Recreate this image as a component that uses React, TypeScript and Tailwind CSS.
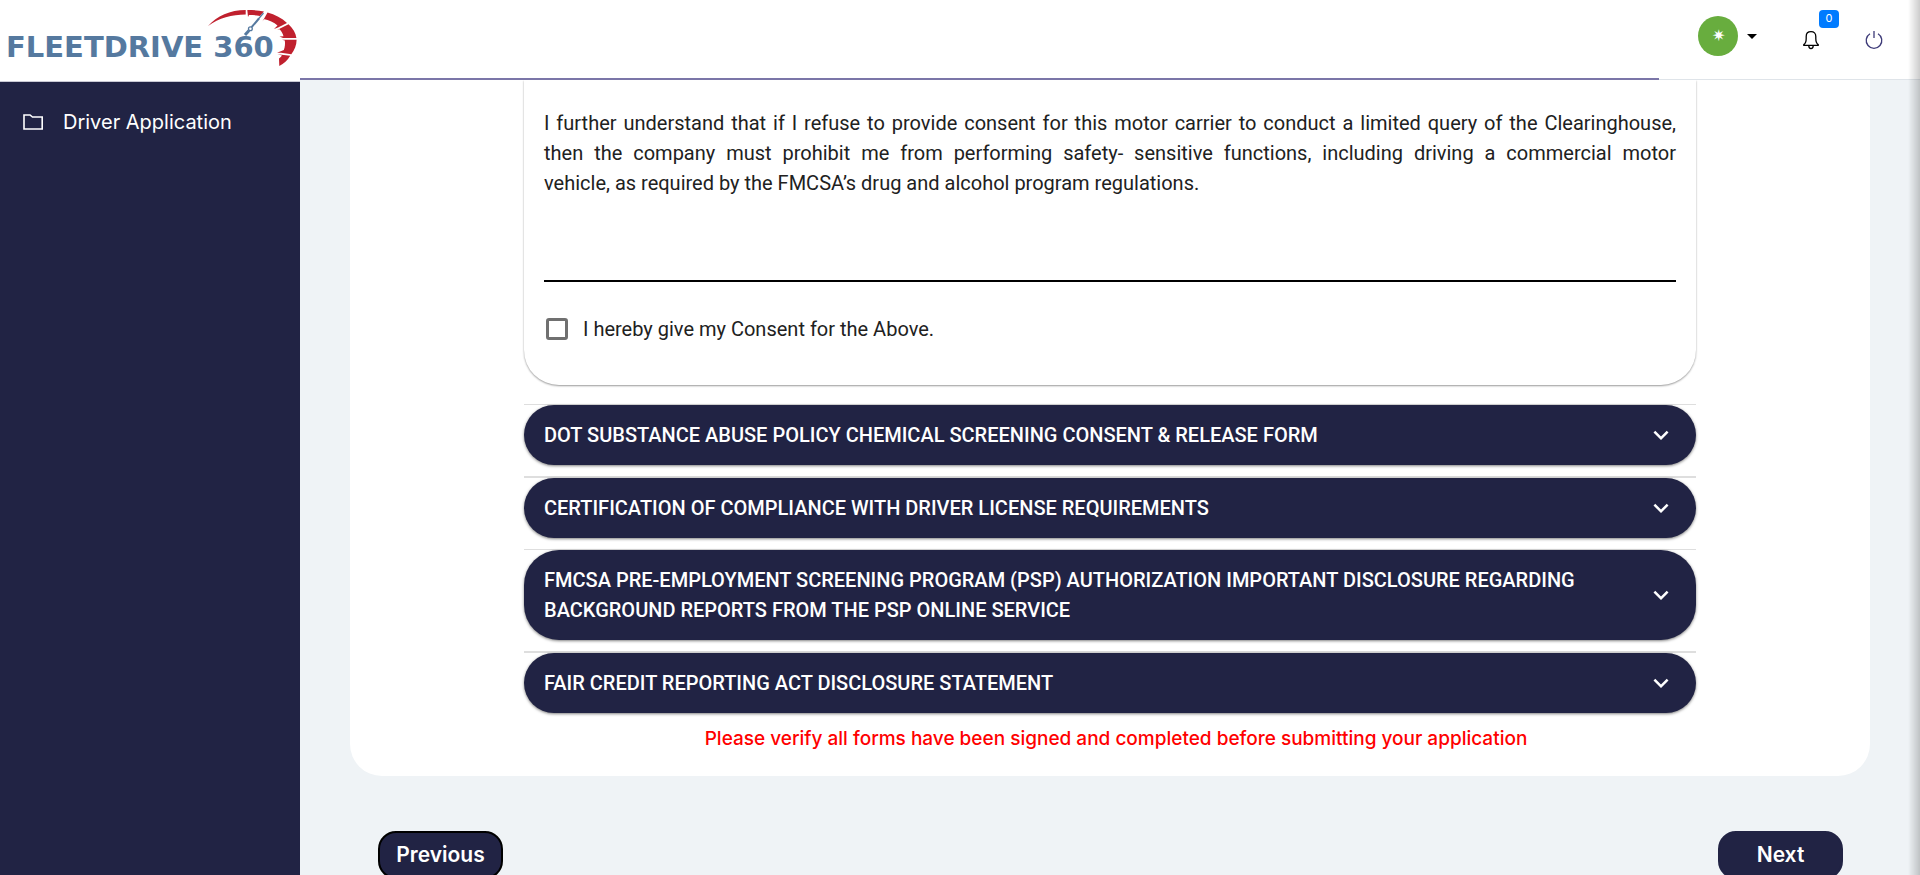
import { ReactNode } from "react";
import { MdExpandMore } from "react-icons/md";

type Form = { title: string; rule: string };

const FORMS: Form[] = [
  { title: "DOT SUBSTANCE ABUSE POLICY CHEMICAL SCREENING CONSENT & RELEASE FORM", rule: "mt-[19px] border-t" },
  { title: "CERTIFICATION OF COMPLIANCE WITH DRIVER LICENSE REQUIREMENTS", rule: "mt-[11px] border-t-2" },
  {
    title:
      "FMCSA PRE-EMPLOYMENT SCREENING PROGRAM (PSP) AUTHORIZATION IMPORTANT DISCLOSURE REGARDING BACKGROUND REPORTS FROM THE PSP ONLINE SERVICE",
    rule: "mt-[11px] border-t",
  },
  { title: "FAIR CREDIT REPORTING ACT DISCLOSURE STATEMENT", rule: "mt-[11px] border-t-2" },
];

function Gauge() {
  return (
    <svg viewBox="0 0 90 58" className="absolute top-[9px] left-[208px] h-[58px] w-[90px]" aria-hidden="true">
      <g fill="#c0202e">
        <path d="M0 17C9 7 22 1 37.7 1L37.7 5.5C24 5.5 11 9 0 17Z" />
        <path d="M39.3 1C45 1 51 1.2 56 2.4L52 7C48 6.2 45 6 41 6L40 8Z" />
        <path d="M59.5 3.5C67 5.5 74 9 79 14L70 18.5L66 20L69.5 16.5C66 13.5 61 10.8 55.5 10L54.5 12.5Z" />
        <path d="M80.5 15.3C85 19.5 87.7 24 88.4 28.9L75 28.9L71.5 27.6L75.5 27.3C74.8 24.5 73.5 22.3 71.5 20.3L69 21Z" />
        <path d="M88.6 30.8C88.6 36 86.5 41.5 83.3 45.3L73 43.8L69 43.8L75.8 41C77 38 77.3 35 76.8 31.6L74 30.8Z" />
        <path d="M82.2 46.8C79.5 51.5 76 54.5 71.3 57L71 49.5C72.3 48.5 73.3 47.5 74 46.6L69.5 45.3Z" />
      </g>
      <g stroke="#55799f" fill="none">
        <path d="M55.5 4L50 10.5" strokeWidth="1.2" />
        <path d="M51 9.5L43.6 18.2" strokeWidth="2" />
        <circle cx="42.4" cy="19.7" r="1.9" strokeWidth="1.3" />
        <path d="M41 21.5L37 26" strokeWidth="3" />
      </g>
    </svg>
  );
}

function PillButton({ children, border }: { children: ReactNode; border: string }) {
  return (
    <button
      type="button"
      className={`h-12 w-[125px] rounded-[18px] border-2 bg-[#212344] font-['Inter'] text-[21px] leading-7 font-semibold text-white ${border}`}
    >
      {children}
    </button>
  );
}

export default function App() {
  return (
    <div className="flex h-screen overflow-hidden bg-[#eff3f6] font-['Roboto',sans-serif]">
      <aside className="flex w-[300px] shrink-0 flex-col bg-[#212344]">
        <a href="#home" aria-label="FleetDrive 360" className="relative flex h-[82px] shrink-0 items-center border-b border-[#c9c9d4] bg-white pt-3 pl-1.5">
          <span className="font-['DejaVu_Sans'] text-[29px] leading-8 font-bold whitespace-nowrap text-[#55799f]">FLEETDRIVE 360</span>
          <Gauge />
        </a>
        <nav className="pt-[26px] pl-[22px]">
          <a href="#application" className="flex items-center gap-[19px] text-white">
            <svg viewBox="0 0 22 18" className="h-[18px] w-[22px]" fill="none" stroke="currentColor" strokeWidth="1.6" aria-hidden="true">
              <path d="M2 16V2H8L10.5 4H20.2V16Z" />
            </svg>
            <span className="font-['Inter'] text-xl leading-7">Driver Application</span>
          </a>
        </nav>
      </aside>

      <div className="flex min-w-0 flex-1 flex-col">
        <header className="relative flex h-20 shrink-0 items-center justify-end border-b border-[#dfe4e9] bg-white pr-[37px]">
          <button type="button" aria-label="Account" className="flex items-center gap-[9px]">
            <span className="mb-2 flex size-10 items-center justify-center rounded-full bg-[#68ad3e] text-base text-white">✷</span>
            <span className="mb-1.5 border-x-[5px] border-t-[5px] border-x-transparent border-t-black" />
          </button>
          <button type="button" aria-label="Notifications" className="relative ml-[46px]">
            <svg viewBox="0 0 16 20" className="h-5 w-4" fill="none" stroke="#000" strokeWidth="1.3" aria-hidden="true">
              <path d="M0.8 15.4V14.6C2.6 13.4 3.2 11.5 3.2 8.5V6.5C3.2 3.5 5 1.7 8 1.7S12.8 3.5 12.8 6.5V8.5C12.8 11.5 13.4 13.4 15.2 14.6V15.4Z" />
              <path d="M5.8 15.8C5.8 17.6 6.8 18.6 8 18.6S10.2 17.6 10.2 15.8" />
            </svg>
            <span className="absolute -top-5 left-4 flex h-[18px] w-5 items-center justify-center rounded-sm bg-[#007bff] font-['Inter'] text-[11px] text-white">0</span>
          </button>
          <button type="button" aria-label="Log out" className="ml-[46px]">
            <svg viewBox="0 0 18 20" className="h-5 w-[18px]" fill="none" stroke="#3d3a78" strokeWidth="1.3" aria-hidden="true">
              <path d="M5 3.8A7.8 7.8 0 1 0 13 3.8M9 1V8" />
            </svg>
          </button>
          <div className="absolute -bottom-px left-0 h-0.5 w-[1359px] max-w-full bg-[#7b76a8]" />
        </header>

        <main className="px-[50px]">
          <section className="rounded-b-[32px] bg-white px-[174px] pb-[23px]">
            <div className="rounded-b-[35px] px-5 pt-[28px] pb-[41px] text-[#212121] shadow-[0_1px_2px_rgba(0,0,0,0.4)]">
              <p className="text-justify text-xl leading-[30px]">
                I further understand that if I refuse to provide consent for this motor carrier to conduct a limited query of the Clearinghouse, then the company must prohibit me from performing safety- sensitive functions, including driving a commercial motor vehicle,&nbsp;as required by the FMCSA’s drug and alcohol program regulations.
              </p>
              <hr className="mt-[82px] border-t-2 border-black" />
              <label className="mt-8 flex items-center gap-[15px] text-xl leading-[30px]">
                <input type="checkbox" className="ml-0.5 size-[22px] appearance-none rounded-[3px] border-[3px] border-[#707070]" />
                I hereby give my Consent for the Above.
              </label>
            </div>

            {FORMS.map((form) => (
              <div key={form.title} className={`border-[#dedede] ${form.rule}`}>
                <button
                  type="button"
                  aria-expanded="false"
                  className="flex w-full items-center justify-between rounded-[35px] bg-[#212344] px-5 py-[15px] text-left text-xl leading-[30px] font-medium text-white shadow-[0_1px_3px_rgba(0,0,0,0.5)]"
                >
                  <span className="max-w-[1060px]">{form.title}</span>
                  <MdExpandMore className="size-[30px] shrink-0" />
                </button>
              </div>
            ))}

            <p className="mt-3 pl-3 text-center font-['Inter'] text-[19px] leading-7 font-medium text-[#ff0000]">
              Please verify all forms have been signed and completed before submitting your application
            </p>
          </section>

          <div className="mt-[55px] flex justify-between pr-[27px] pl-7">
            <PillButton border="border-black">Previous</PillButton>
            <PillButton border="border-[#212344]">Next</PillButton>
          </div>
        </main>
      </div>

      <div className="pointer-events-none fixed inset-y-0 right-0 w-3 bg-linear-to-l from-black/20 to-transparent" />
    </div>
  );
}
